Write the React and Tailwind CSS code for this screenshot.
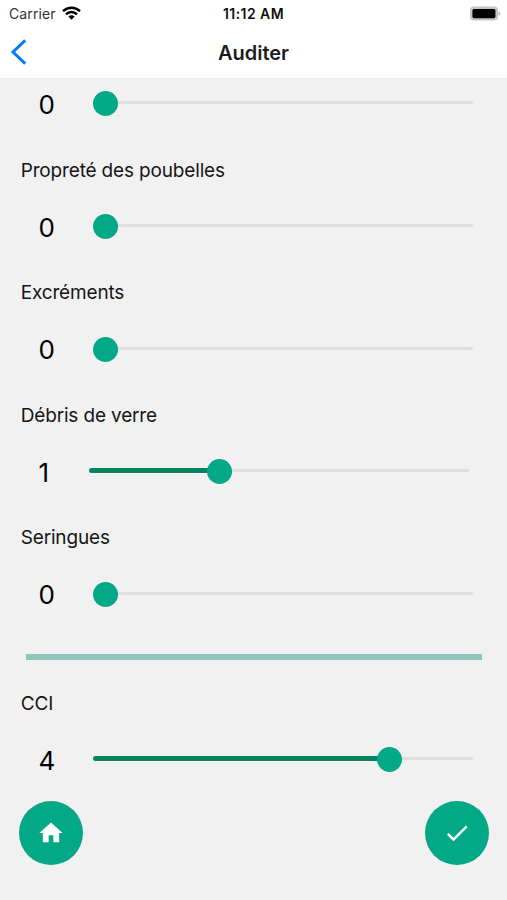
import { MdCheck, MdHome } from "react-icons/md";

const criteria = [
  { value: 0, max: 3 },
  { label: "Propreté des poubelles", value: 0, max: 3 },
  { label: "Excréments", value: 0, max: 3 },
  { label: "Débris de verre", value: 1, max: 3 },
  { label: "Seringues", value: 0, max: 3 },
];

function StatusBar() {
  return (
    <div className="grid h-[27px] grid-cols-3 items-center px-[8px]">
      <div className="flex items-center gap-[6px] pl-px">
        <span className="text-[14px] tracking-[0.1px] text-[#333]">Carrier</span>
        <svg className="-mt-px h-[14px] w-[19px]" viewBox="0 0 19 14" fill="none" stroke="#000" strokeWidth="2.5">
          <path d="M1 5.1C5.8.5 13.2.5 18 5.1" />
          <path d="M4 8.3c3.1-3 7.9-3 11 0" />
          <path d="M6.4 10.6a4.4 4.4 0 0 1 6.2 0L9.5 13.8Z" fill="#000" stroke="none" />
        </svg>
      </div>
      <span className="text-center text-[14px] leading-[27px] font-semibold tracking-[0.45px] text-[#111]">
        11:12 AM
      </span>
      <svg className="-mr-[2px] h-[15px] w-[32px] justify-self-end" viewBox="0 0 32 15">
        <rect x="1" y="0.6" width="28" height="14" rx="4" fill="#c4c4c4" />
        <rect x="3.4" y="3" width="23" height="9.2" rx="1.6" fill="#000" />
        <path d="M29.6 5.3c2 .8 2 3.8 0 4.6Z" fill="#b0b0b0" />
      </svg>
    </div>
  );
}

function Header() {
  return (
    <header className="h-[79px] border-b border-[#eeeeee] bg-white">
      <StatusBar />
      <div className="grid h-[51px] grid-cols-3 items-center px-[10px]">
        <svg className="-mt-px h-[26px] w-[17px]" viewBox="0 0 17 26" fill="none" stroke="#087bfa" strokeWidth="3">
          <path d="M15.2 1.3 3 13l12.2 11.7" />
        </svg>
        <h1 className="text-center text-[20px] font-semibold text-[#1c1c1e]">Auditer</h1>
      </div>
    </header>
  );
}

function Slider({ value, max }) {
  const position = 12.3 + (value / max) * 355;

  return (
    <div className="flex h-[40.6px] items-center pl-[38.6px]">
      <span className={`${value === 1 ? "w-[50.4px]" : "w-[54.4px]"} shrink-0 pt-[2px] text-[26px] leading-[40px]`}>
        {value}
      </span>
      <div className="relative h-[25px] w-[380px]">
        <div className="absolute left-0 top-[10px] h-[3px] w-full rounded-full bg-[#dedede]" />
        {value > 0 && (
          <div
            className="absolute left-0 top-[9px] h-[5px] rounded-full bg-[#078263]"
            style={{ width: position }}
          />
        )}
        <div
          className="absolute top-0 size-[25px] rounded-full bg-[#03a886]"
          style={{ left: position - 12.5 }}
        />
      </div>
    </div>
  );
}

function Criterion({ label, value, max }) {
  return (
    <section>
      {label && (
        <h2 className="h-[82px] pl-[20.7px] pt-[32.3px] text-[19px] leading-[28px] tracking-[-0.16px] text-[#161616]">
          {label}
        </h2>
      )}
      <Slider value={value} max={max} />
    </section>
  );
}

export default function App() {
  return (
    <div className="h-[900px] w-full overflow-hidden bg-[#f1f1f1] font-['Inter','Liberation_Sans',sans-serif] text-black">
      <Header />

      <main className="pt-[4.7px]">
        {criteria.map((item, i) => (
          <Criterion key={i} {...item} />
        ))}

        <div className="-mb-[3px] ml-[26px] mt-[39.7px] h-[6px] w-[456px] bg-[#90c5bb]" />

        <Criterion label="CCI" value={4} max={5} />
      </main>

      {/* Actions */}
      <div className="flex justify-between pl-[19px] pr-[18px] pt-[21px] text-white">
        <button className="flex size-[64px] items-center justify-center rounded-full bg-[#03a886]">
          <MdHome className="size-[28px]" />
        </button>
        <button className="flex size-[64px] items-center justify-center rounded-full bg-[#03a886]">
          <MdCheck className="size-[28px]" />
        </button>
      </div>
    </div>
  );
}
